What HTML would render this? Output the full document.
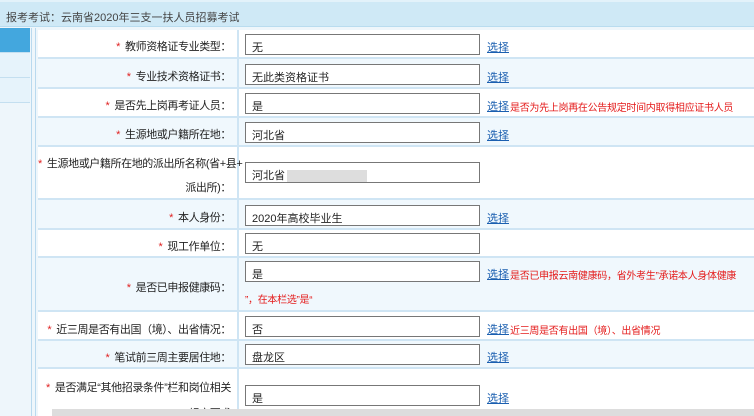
<!DOCTYPE html>
<html><head><meta charset="utf-8"><style>
*{margin:0;padding:0;box-sizing:border-box}
html,body{width:754px;height:416px;overflow:hidden}
body{background:#eef6fb;font-family:"Liberation Sans","Noto Sans CJK SC",sans-serif;font-size:11px;color:#222;position:relative;white-space:nowrap}
.hdr{position:absolute;left:0;top:0;width:754px;height:27px;background:#cfe9f6;border-top:2px solid #e3f2fa;border-bottom:1px solid #b9dcef;color:#444;font-size:11px;padding:7px 0 0 6px}
.side{position:absolute;left:0;top:28px;width:30px}
.side div{height:25px;border-bottom:1px solid #c4dff0;background:#e6f3fb}
.side .sel{background:#43a7de}
.vl{position:absolute;top:28px;height:388px;width:1px;background:#b9d9ee}
.row{position:absolute;left:38px;width:716px;border-bottom:2px solid #cfe5f4;overflow:hidden}
.row.l{background:#f0f8fd}.row.w{background:#fff}
.lab{position:absolute;left:0;top:0;width:201px;height:100%;border-right:2px solid #cfe5f4;text-align:right;padding-right:6px;letter-spacing:-0.4px}
.lab .s{color:#e02020;margin-right:5px}
.inp{position:absolute;left:207px;width:235px;height:21px;border:1px solid #777;background:#fff;padding:4px 0 0 6px}
.lk{position:absolute;left:449px;color:#1b5fb0;text-decoration:underline}
.red{color:#e41b1b;font-size:10px;letter-spacing:-0.3px}
.sb{position:absolute;left:52px;top:409px;width:702px;height:7px;background:#ddd}
</style></head><body>
<div class="hdr">报考考试：云南省2020年三支一扶人员招募考试</div>
<div class="side"><div class="sel"></div><div></div><div></div></div>
<div class="vl" style="left:31px"></div><div class="vl" style="left:35px"></div>

<div class="row w" style="top:30px;height:29px"><div class="lab" style="padding-top:8px"><span class="s">*</span>教师资格证专业类型：</div><div class="inp" style="top:4px">无</div><span class="lk" style="top:9px">选择</span></div>
<div class="row l" style="top:59px;height:30px"><div class="lab" style="padding-top:9px"><span class="s">*</span>专业技术资格证书：</div><div class="inp" style="top:5px">无此类资格证书</div><span class="lk" style="top:10px">选择</span></div>
<div class="row w" style="top:89px;height:29px"><div class="lab" style="padding-top:8px"><span class="s">*</span>是否先上岗再考证人员：</div><div class="inp" style="top:4px">是</div><span class="lk" style="top:9px">选择</span><span class="red" style="position:absolute;left:472px;top:10px">是否为先上岗再在公告规定时间内取得相应证书人员</span></div>
<div class="row l" style="top:118px;height:29px"><div class="lab" style="padding-top:8px"><span class="s">*</span>生源地或户籍所在地：</div><div class="inp" style="top:4px">河北省</div><span class="lk" style="top:9px">选择</span></div>
<div class="row w" style="top:147px;height:53px"><div class="lab" style="padding-top:5px;line-height:24px"><span class="s">*</span>生源地或户籍所在地的派出所名称(省+县+<br>派出所)：</div><div class="inp" style="top:15px">河北省<span style="display:inline-block;width:80px;height:12px;background:#ddd;vertical-align:middle;margin-left:2px"></span></div></div>
<div class="row l" style="top:200px;height:30px"><div class="lab" style="padding-top:9px"><span class="s">*</span>本人身份：</div><div class="inp" style="top:5px">2020年高校毕业生</div><span class="lk" style="top:10px">选择</span></div>
<div class="row w" style="top:230px;height:28px"><div class="lab" style="padding-top:8px"><span class="s">*</span>现工作单位：</div><div class="inp" style="top:3px">无</div></div>
<div class="row l" style="top:258px;height:54px"><div class="lab" style="padding-top:21px"><span class="s">*</span>是否已申报健康码：</div><div class="inp" style="top:3px">是</div><span class="lk" style="top:8px">选择</span><span class="red" style="position:absolute;left:472px;top:9px">是否已申报云南健康码，省外考生”承诺本人身体健康</span><span class="red" style="position:absolute;left:207px;top:33px">”，在本栏选”是“</span></div>
<div class="row w" style="top:312px;height:29px"><div class="lab" style="padding-top:9px"><span class="s">*</span>近三周是否有出国（境）、出省情况：</div><div class="inp" style="top:4px">否</div><span class="lk" style="top:9px">选择</span><span class="red" style="position:absolute;left:472px;top:10px">近三周是否有出国（境）、出省情况</span></div>
<div class="row l" style="top:341px;height:28px"><div class="lab" style="padding-top:8px"><span class="s">*</span>笔试前三周主要居住地：</div><div class="inp" style="top:3px">盘龙区</div><span class="lk" style="top:8px">选择</span></div>
<div class="row w" style="top:369px;height:50px"><div class="lab" style="padding-top:6px;line-height:26px"><span class="s">*</span>是否满足“其他招录条件”栏和岗位相关<br>规定要求</div><div class="inp" style="top:16px">是</div><span class="lk" style="top:21px">选择</span></div>
<div class="sb"></div>
</body></html>
